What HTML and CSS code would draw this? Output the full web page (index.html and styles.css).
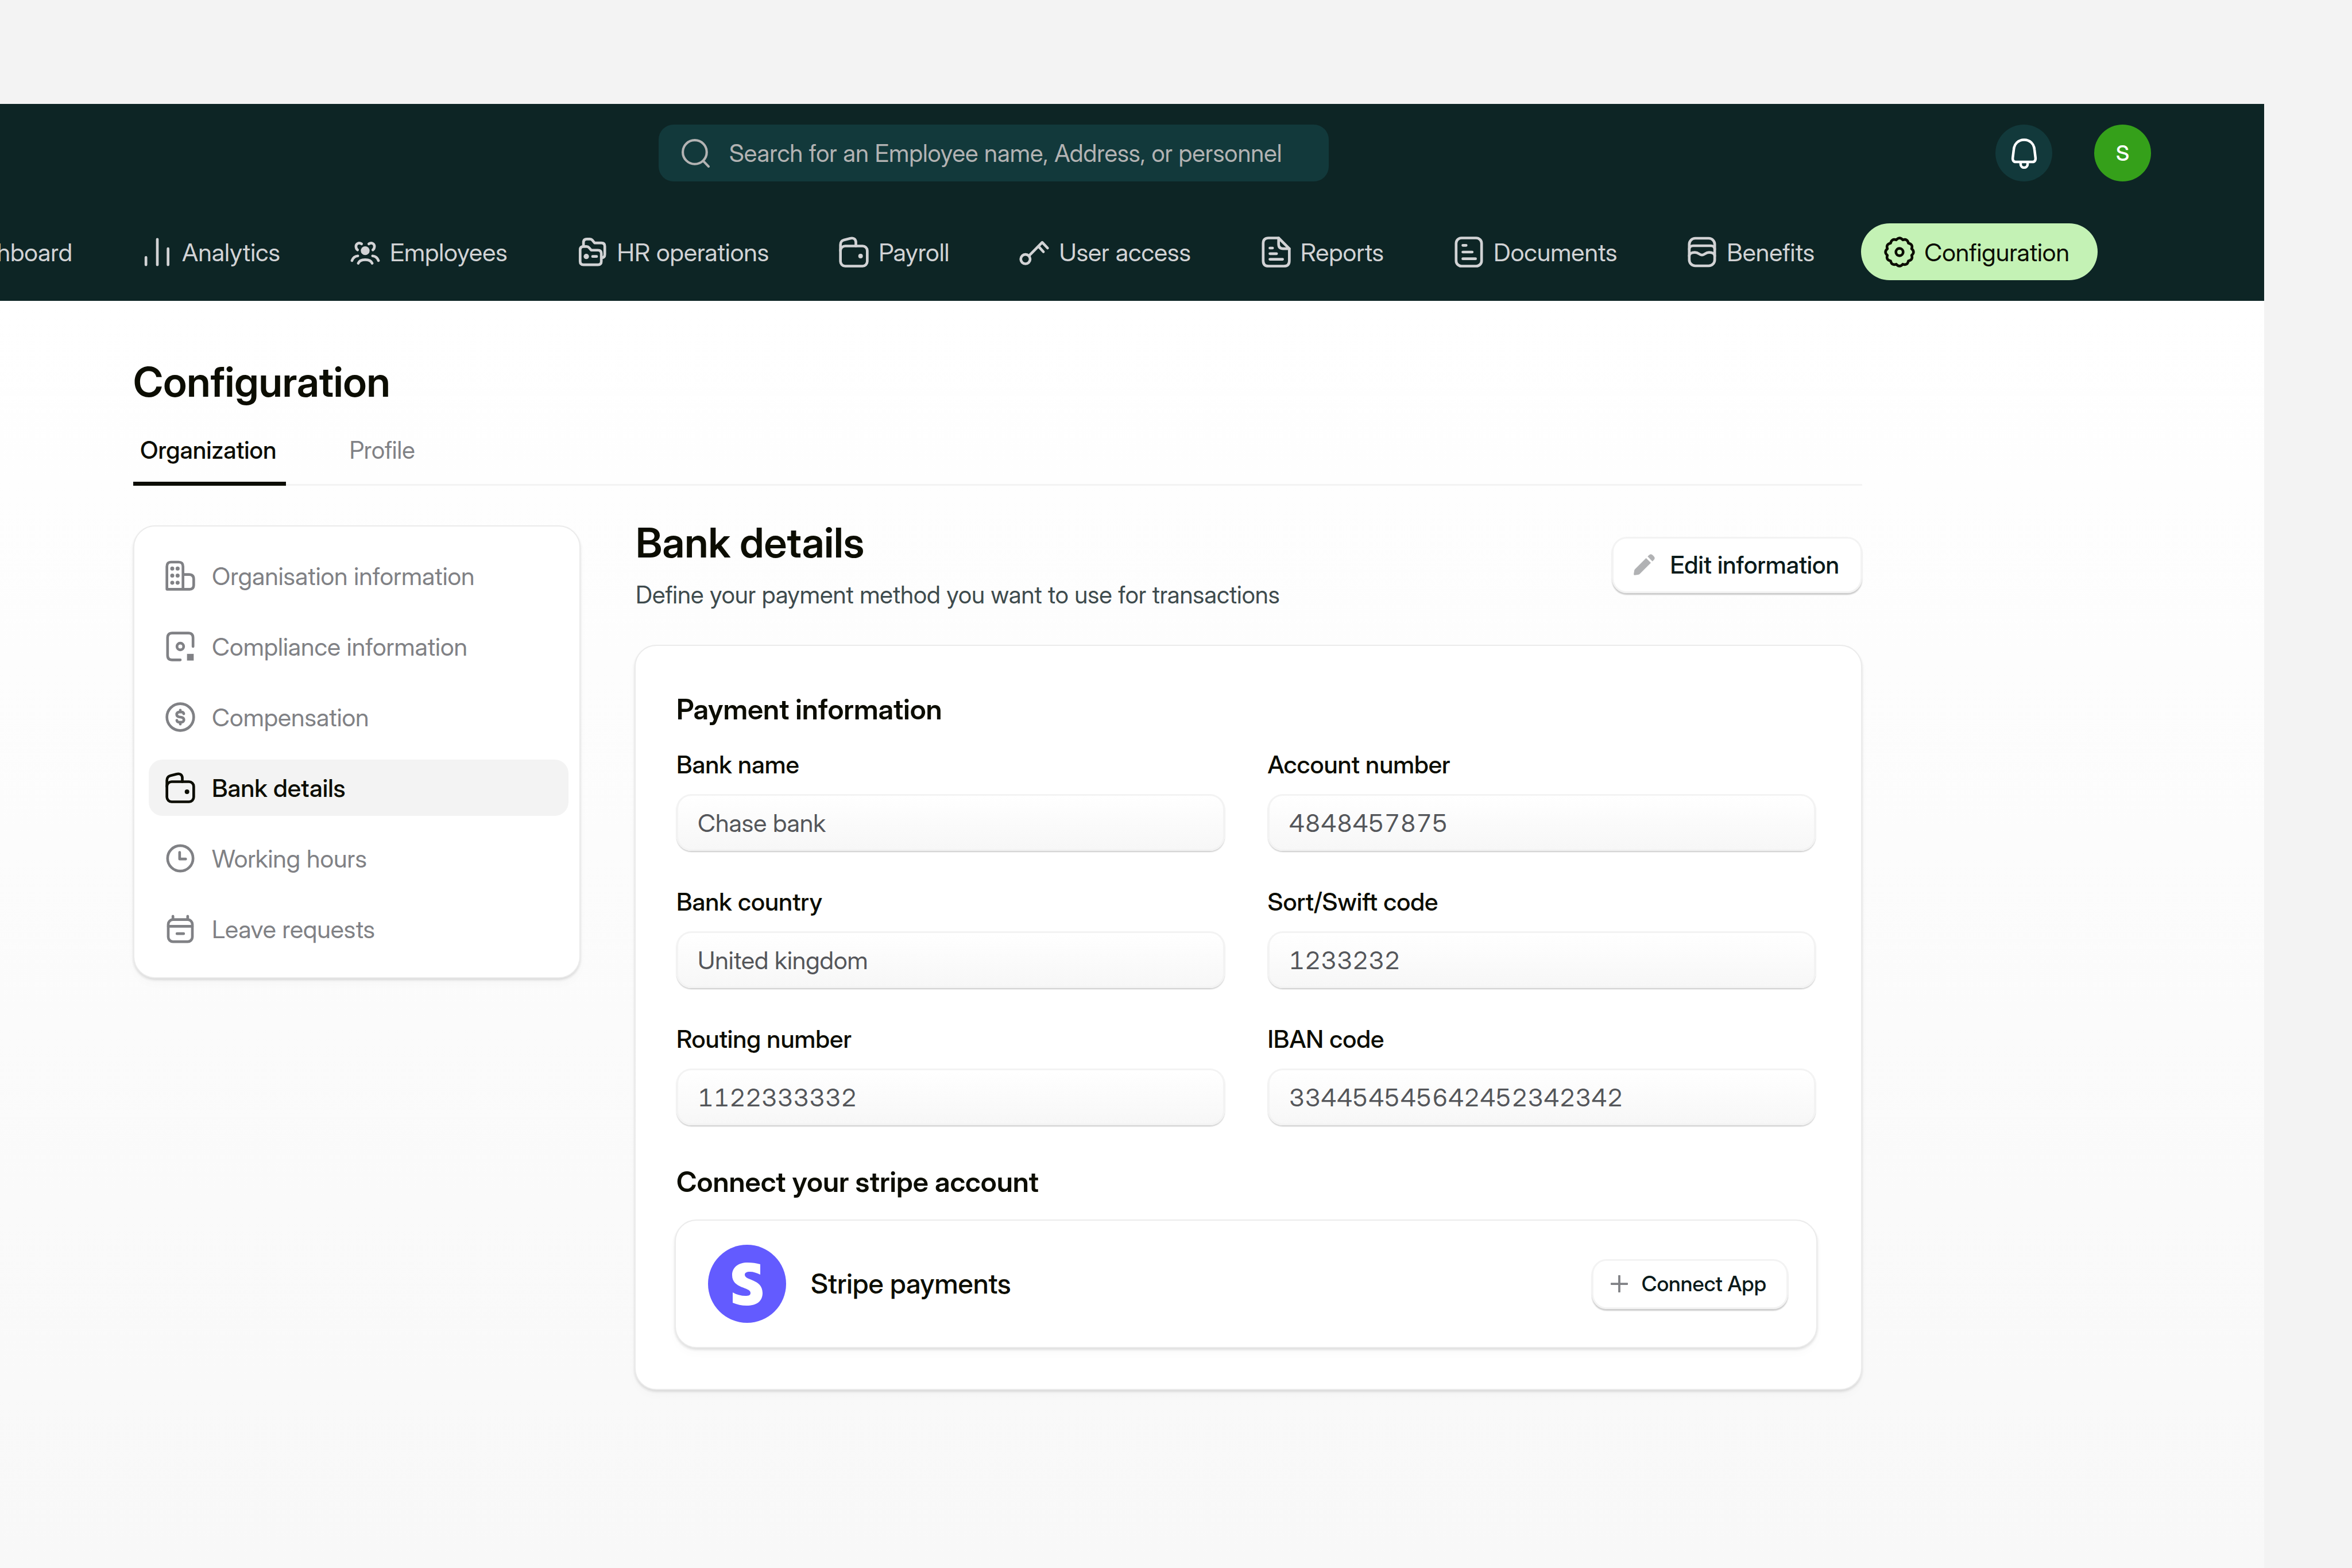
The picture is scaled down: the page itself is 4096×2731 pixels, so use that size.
FILE: index.html
```
<!DOCTYPE html>
<html lang="en">
<head>
    <meta charset="UTF-8">
    <meta name="viewport" content="width=device-width, initial-scale=1.0">
    <title>Configuration - Bank details</title>
    <link rel="stylesheet" href="styles.css">
</head>
<body>
    <div class="app">
        <header class="header">
            <div class="topbar">
                <label class="search">
                    <svg class="search-icon" viewBox="0 0 24 24"><circle cx="11" cy="11" r="10"/><path d="M18 18.3l4.5 4.7"/></svg>
                    <input type="search" placeholder="Search for an Employee name, Address, or personnel" aria-label="Search">
                </label>
                <div class="user">
                    <button class="bell" type="button" aria-label="Notifications">
                        <svg viewBox="0 0 24 24"><path d="M12 1.500c-4.600 0-7.600 3.300-8 7.500l-.8 6.500c-.2 2 .6 3.200 2.400 3.200h12.800c1.800 0 2.600-1.200 2.400-3.200l-.8-6.500c-.4-4.200-3.400-7.500-8-7.500z"/><path d="M9.300 19.200v1.200a2.700 2.700 0 0 0 5.400 0v-1.200"/></svg>
                    </button>
                    <button class="avatar" type="button">S</button>
                </div>
            </div>
            <nav class="nav">
                <a class="nav-item" href="#">
                    <svg class="icon" viewBox="0 0 24 24"><rect x="2" y="2" width="20" height="20" rx="4"/></svg>
                    Dashboard
                </a>
                <a class="nav-item" href="#">
                    <svg class="icon" viewBox="0 0 24 24"><path d="M3.500 16v5.500M12 2.500v19M20 9.500v12"/></svg>
                    Analytics
                </a>
                <a class="nav-item" href="#">
                    <svg class="icon" viewBox="0 0 24 24"><circle class="dot" cx="12" cy="11" r="3.300"/><path d="M6.800 20.400c.6-1.800 2.600-2.700 5.200-2.700s4.600.9 5.200 2.700M9.300 5.900c-2-1.300-4.200-.2-4.200 1.900 0 1 .4 1.900 1.200 2.600M14.700 5.900c2-1.300 4.200-.2 4.200 1.900 0 1-.4 1.900-1.200 2.600M6.500 14.900c-2.200.2-3.700 1.600-4.400 3.500M17.500 14.900c2.200.2 3.700 1.600 4.400 3.500"/></svg>
                    Employees
                </a>
                <a class="nav-item" href="#">
                    <svg class="icon" viewBox="0 0 24 24"><path d="M2.700 10.400c0-1.700.8-2.500 2.500-2.500h2.300c.8 0 1.300.2 1.800.8l1.700 1.900h5c1.700 0 2.500.8 2.500 2.500V19c0 1.700-.8 2.500-2.500 2.500H5.200c-1.700 0-2.500-.8-2.500-2.500z"/><path d="M5.200 7.700V4.800c0-1.700.8-2.500 2.500-2.500H10c.8 0 1.300.2 1.800.8l1.700 2.100h5.100c1.700 0 2.500.8 2.500 2.500v6c0 1.700-.8 2.500-2.300 2.500"/><circle class="dot" cx="7.300" cy="15.300" r="2"/><path d="M12 15.300h3"/></svg>
                    HR operations
                </a>
                <a class="nav-item" href="#">
                    <svg class="icon" viewBox="0 0 24 24"><rect x="2" y="7.500" width="20" height="15" rx="3.500"/><path d="M2 11V6.500c0-2 .8-3 2.600-3.500l4.600-1.200c2.500-.7 4.300.5 4.300 3v2.700"/><circle class="dot" cx="17" cy="15" r="1.700"/></svg>
                    Payroll
                </a>
                <a class="nav-item" href="#">
                    <svg class="icon" viewBox="0 0 24 24"><circle cx="5.500" cy="17.300" r="3.500"/><path d="M8.200 14.700L18 4.800l4 4.200M15.200 7.800l3.700 4"/></svg>
                    User access
                </a>
                <a class="nav-item" href="#">
                    <svg class="icon" viewBox="0 0 24 24"><path d="M6.500 1.500H14l8 8v9c0 2.600-1.400 4-4 4H6.500c-2.600 0-4-1.400-4-4v-13c0-2.600 1.400-4 4-4z"/><path d="M14 1.500V6c0 2.300 1.200 3.500 3.500 3.500H22M7.500 9h2M7.500 13.200h5M7.500 17.400h9.500"/></svg>
                    Reports
                </a>
                <a class="nav-item" href="#">
                    <svg class="icon" viewBox="0 0 24 24"><rect x="2.500" y="1.500" width="19" height="21" rx="4"/><path d="M7.500 7h2.500M7.500 12h7M7.500 17h9.500"/></svg>
                    Documents
                </a>
                <a class="nav-item" href="#">
                    <svg class="icon" viewBox="0 0 24 24"><rect x="2.500" y="1.700" width="19" height="20.600" rx="4.500"/><path d="M2.500 10c0-1.700 1.200-2.700 3-2.700h13c1.800 0 3 1 3 2.700"/><path d="M2.500 15c0-1.800 1.700-2.700 4.200-2.700 3 0 3.100 1.900 5.300 1.900s2.300-1.900 5.300-1.900c2.500 0 4.200.9 4.200 2.700"/></svg>
                    Benefits
                </a>
                <a class="nav-item nav-item-active" href="#">
                    <svg class="icon" viewBox="0 0 24 24"><path d="M21.080 9.570Q23.800 12 21.080 14.430Q22.220 17.900 18.650 18.650Q17.900 22.220 14.430 21.080Q12 23.800 9.570 21.080Q6.100 22.220 5.350 18.650Q1.780 17.900 2.920 14.430Q.2 12 2.920 9.570Q1.780 6.100 5.350 5.350Q6.100 1.780 9.570 2.920Q12 .2 14.430 2.920Q17.900 1.780 18.650 5.350Q22.220 6.100 21.080 9.570z"/><circle cx="12" cy="12" r="2.700"/></svg>
                    Configuration
                </a>
            </nav>
        </header>

        <main class="content">
            <h1>Configuration</h1>
            <div class="tabs">
                <a class="tab tab-active" href="#">Organization</a>
                <a class="tab" href="#">Profile</a>
            </div>

            <div class="columns">
                <aside class="card sidebar">
                    <a class="side-item" href="#">
                        <svg class="icon" viewBox="0 0 24 24"><path d="M2 22V5c0-2.200 1-3.300 3.200-3.300h5.600C13 1.700 14 2.800 14 5v17zM14 11h4.500c2.200 0 3.500 1.200 3.500 3.500V19c0 2-1 3-3 3h-5"/><path class="dots" d="M6 6.500h.01M10 6.500h.01M6 11.800h.01M10 11.800h.01M6 17.100h.01M10 17.100h.01"/></svg>
                        Organisation information
                    </a>
                    <a class="side-item" href="#">
                        <svg class="icon" viewBox="0 0 24 24"><path d="M21.500 12V5.500c0-2.300-1.200-3.500-3.500-3.500H6C3.700 2 2.500 3.200 2.500 5.500v13C2.500 20.800 3.700 22 6 22h6"/><circle cx="12" cy="12" r="2.500"/><rect class="dot" x="17" y="17.500" width="5" height="5"/></svg>
                        Compliance information
                    </a>
                    <a class="side-item" href="#">
                        <svg class="icon" viewBox="0 0 24 24"><circle cx="12" cy="12" r="10"/><path d="M14.600 9.500c-.2-.9-.9-1.300-1.800-1.300h-1.500c-1.200 0-2 .7-2 1.800 0 1.200.7 1.700 2 1.900l1.400.2c1.300.2 2 .7 2 1.900 0 1.100-.8 1.800-2 1.800h-1.500c-1 0-1.700-.5-1.800-1.400M12 6.800v1.400M12 15.800v1.400"/></svg>
                        Compensation
                    </a>
                    <a class="side-item side-item-active" href="#">
                        <svg class="icon" viewBox="0 0 24 24"><rect x="2" y="7.500" width="20" height="15" rx="3.500"/><path d="M2 11V6.500c0-2 .8-3 2.600-3.500l4.600-1.200c2.500-.7 4.300.5 4.300 3v2.700"/><circle class="dot" cx="17" cy="15" r="1.700"/></svg>
                        Bank details
                    </a>
                    <a class="side-item" href="#">
                        <svg class="icon" viewBox="0 0 24 24"><circle cx="12" cy="12" r="9.500"/><path d="M11.500 7.500v5h4.500"/></svg>
                        Working hours
                    </a>
                    <a class="side-item" href="#">
                        <svg class="icon" viewBox="0 0 24 24"><rect x="3" y="5" width="18" height="16.500" rx="3.500"/><path d="M3 10h18M6.500 5V2.500M17.500 5V2.500M9.500 15.500h5"/></svg>
                        Leave requests
                    </a>
                </aside>

                <section class="details">
                    <div class="details-head">
                        <div>
                            <h2>Bank details</h2>
                            <p>Define your payment method you want to use for transactions</p>
                        </div>
                        <button class="btn" type="button">
                            <svg class="pencil" viewBox="0 0 24 24"><path d="M14.200 4.800l5 5L7.800 21.200c-.6.600-1.200.9-2 1l-3.300.5c-.8.1-1.300-.4-1.200-1.200l.5-3.300c.1-.8.4-1.400 1-2zM15.800 3.200l1.500-1.500c1.200-1.200 2.500-1.200 3.700 0l1.300 1.300c1.200 1.200 1.200 2.500 0 3.700l-1.500 1.500z"/></svg>
                            Edit information
                        </button>
                    </div>

                    <form class="card panel">
                        <h3>Payment information</h3>
                        <div class="fields">
                            <div class="field">
                                <label for="bankName">Bank name</label>
                                <input type="text" id="bankName" value="Chase bank">
                            </div>
                            <div class="field">
                                <label for="accountNumber">Account number</label>
                                <input class="digits" type="text" id="accountNumber" value="4848457875">
                            </div>
                            <div class="field">
                                <label for="bankCountry">Bank country</label>
                                <input type="text" id="bankCountry" value="United kingdom">
                            </div>
                            <div class="field">
                                <label for="swiftCode">Sort/Swift code</label>
                                <input class="digits" type="text" id="swiftCode" value="1233232">
                            </div>
                            <div class="field">
                                <label for="routingNumber">Routing number</label>
                                <input class="digits" type="text" id="routingNumber" value="1122333332">
                            </div>
                            <div class="field">
                                <label for="ibanCode">IBAN code</label>
                                <input class="digits" type="text" id="ibanCode" value="334454545642452342342">
                            </div>
                        </div>

                        <h3>Connect your stripe account</h3>
                        <div class="card stripe">
                            <svg class="stripe-logo" viewBox="0 0 136 136"><circle cx="68" cy="68" r="68"/><path d="M91 34v18c-6-3-12-5-18-5-6 0-9 2-9 5 0 11 31 7 31 32 0 15-11 22-28 22-8 0-17-2-24-5V83c7 4 15 6 22 6 6 0 9-1 9-5 0-11-32-7-32-31 0-14 11-22 27-22 8 0 15 1 22 3z"/></svg>
                            <span class="stripe-name">Stripe payments</span>
                            <button class="btn btn-small" type="button">
                                <svg class="plus" viewBox="0 0 24 24"><path d="M12 1v22M1 12h22"/></svg>
                                Connect App
                            </button>
                        </div>
                    </form>
                </section>
            </div>
        </main>
    </div>
</body>
</html>
```
FILE: styles.css
```
* {
    box-sizing: border-box;
}
body {
    margin: 0;
    background: #f3f3f3;
    color: #0c0d02;
    font-family: "Inter Display", Inter, "Liberation Sans", sans-serif;
    font-size: 43px;
    line-height: 52px;
}
h1, h2, h3, p {
    margin: 0;
}
a {
    color: inherit;
    text-decoration: none;
}
button, input {
    font: inherit;
    color: inherit;
}
svg {
    flex: none;
    fill: none;
    stroke: currentColor;
    stroke-width: 2;
    stroke-linecap: round;
    stroke-linejoin: round;
}
.icon {
    width: 56px;
    height: 56px;
}
.dot {
    fill: currentColor;
    stroke: none;
}
.dots {
    stroke-width: 3;
}
.app {
    display: flex;
    flex-direction: column;
    min-height: 100vh;
    padding: 181px 153px 0 0;
}

/* header */
.header {
    padding: 36px 0;
    background: #0d2525;
    overflow: hidden;
}
.topbar {
    display: flex;
    justify-content: space-between;
    padding: 0 197px 0 1147px;
}
.search {
    display: flex;
    align-items: center;
    gap: 33px;
    width: 1167px;
    height: 99px;
    padding: 0 40px;
    border-radius: 26px;
    background: #12393b;
    color: #b3b3b3;
    font-size: 42px;
}
.search-icon {
    width: 50px;
    height: 50px;
}
.search input {
    flex: 1;
    min-width: 0;
    padding: 0;
    border: 0;
    outline: 0;
    background: none;
}
.search input::placeholder {
    color: #b3b3b3;
    opacity: 1;
}
.user {
    display: flex;
    gap: 73px;
}
.bell, .avatar {
    display: flex;
    align-items: center;
    justify-content: center;
    width: 99px;
    height: 99px;
    padding: 0;
    border: 0;
    border-radius: 50%;
    background: #12393b;
    color: #fff;
}
.bell svg {
    width: 54px;
    height: 54px;
}
.avatar {
    background: #35a01a;
    font-size: 37px;
    font-weight: 500;
}
.nav {
    display: flex;
    justify-content: flex-end;
    gap: 32px;
    margin-top: 73px;
    padding-right: 290px;
    color: #d2d3d5;
}
.nav-item {
    display: flex;
    align-items: center;
    gap: 15px;
    height: 99px;
    padding: 0 49px 0 39px;
    border-radius: 50px;
    white-space: nowrap;
}
.nav-item-active {
    background: #c4f2b5;
    color: #0c0d02;
}

/* page */
.content {
    flex: 1;
    padding: 102px 700px 0 232px;
    background: linear-gradient(#fff, #f8f8f8);
}
h1, h2 {
    font-size: 72px;
    font-weight: 600;
    line-height: 78px;
}
h3 {
    font-size: 49px;
    font-weight: 600;
    line-height: 58px;
}
.tabs {
    display: flex;
    gap: 99px;
    margin-top: 54px;
    border-bottom: 3px solid #f3f3f3;
    font-size: 42px;
}
.tab {
    margin-bottom: -3px;
    padding: 0 16px 29px 12px;
    color: #808185;
}
.tab-active {
    border-bottom: 7px solid #0c0d02;
    color: #0c0d02;
    font-weight: 500;
}
.columns {
    display: flex;
    align-items: flex-start;
    gap: 94px;
    margin-top: 69px;
}
.card {
    border: 2px solid #ebebeb;
    border-radius: 38px;
    background: #fff;
    box-shadow: 0 3px 4px rgba(0, 0, 0, 0.12), 0 10px 16px rgba(0, 0, 0, 0.02);
}
.sidebar {
    display: flex;
    flex: 0 0 779px;
    flex-direction: column;
    gap: 25px;
    padding: 37px 19px 35px 25px;
    color: #808185;
}
.side-item {
    display: flex;
    align-items: center;
    gap: 27px;
    height: 98px;
    padding: 0 27px;
    border-radius: 24px;
}
.side-item-active {
    background: #f3f3f3;
    color: #0c0d02;
    font-weight: 500;
}

/* bank details */
.details {
    flex: 1;
}
.details-head {
    display: flex;
    align-items: center;
    justify-content: space-between;
    margin-top: -9px;
    padding-left: 2px;
}
.details-head p {
    margin-top: 26px;
    color: #3e4b4d;
    font-size: 42px;
}
.btn {
    display: flex;
    align-items: center;
    gap: 26px;
    height: 98px;
    padding: 0 37px 0 33px;
    border: 3px solid #f3f3f3;
    border-radius: 26px;
    background: #fff;
    box-shadow: 0 3px 2px rgba(0, 0, 0, 0.2);
    color: #0a1a1a;
    font-size: 42px;
    font-weight: 500;
}
.btn-small {
    gap: 24px;
    height: 87px;
    margin-left: auto;
    padding: 0 35px 0 30px;
    font-size: 37px;
}
.pencil {
    width: 40px;
    height: 40px;
    color: #b1b2b4;
    fill: currentColor;
    stroke: none;
}
.plus {
    width: 30px;
    height: 30px;
    color: #808185;
    stroke-width: 3;
}
.panel {
    margin-top: 61px;
    padding: 82px 79px 71px 71px;
}
.fields {
    display: grid;
    grid-template-columns: 1fr 1fr;
    gap: 62px 75px;
    margin: 40px 0 70px;
}
.field {
    display: flex;
    flex-direction: column;
    gap: 26px;
}
.field label {
    font-weight: 500;
}
.field input {
    width: 100%;
    height: 99px;
    padding: 0 34px;
    border: 3px solid #f3f3f3;
    border-radius: 26px;
    background: linear-gradient(#fff, #f7f7f7);
    box-shadow: 0 2px 2px rgba(0, 0, 0, 0.2);
    color: #54565a;
}
.field .digits {
    font-variant-numeric: tabular-nums;
}
.stripe {
    display: flex;
    align-items: center;
    gap: 43px;
    margin: 36px -3px 0;
    padding: 42px 49px 42px 56px;
}
.stripe-logo {
    width: 136px;
    height: 136px;
    stroke: none;
}
.stripe-logo circle {
    fill: #635bff;
}
.stripe-logo path {
    fill: #fff;
}
.stripe-name {
    font-size: 48px;
    font-weight: 500;
}
```
